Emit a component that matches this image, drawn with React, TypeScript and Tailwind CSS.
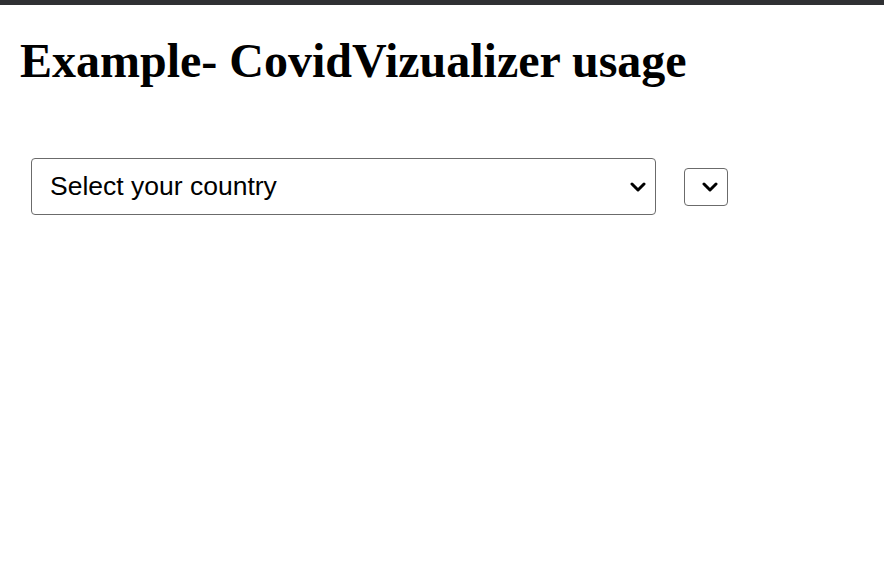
import React from "react";

function Chevron() {
  return (
    <svg
      width="16"
      height="10"
      viewBox="0 0 16 10"
      className="pointer-events-none absolute right-[10px] top-1/2 -translate-y-1/2"
    >
      <path d="M2 2 L8 8 L14 2" fill="none" stroke="#000" strokeWidth="3" strokeLinecap="round" strokeLinejoin="round" />
    </svg>
  );
}

export default function App() {
  return (
    <div className="min-h-screen bg-white">
      <div className="h-[5px] bg-[#2f3033]" />
      <div className="px-[20px]">
        <h1 className="mt-[28px] font-['Liberation_Serif',serif] text-[48px] font-bold leading-[56px] text-black">
          Example- CovidVizualizer usage
        </h1>
        <div className="mt-[69px] flex items-center gap-[28px] pl-[11px]">
          <div className="relative">
            <select className="h-[57px] w-[625px] appearance-none rounded-[4px] border border-[#6b6b6b] bg-white pl-[18px] font-['Liberation_Sans',Arial,sans-serif] text-[26.5px] text-black outline-none">
              <option>Select your country</option>
            </select>
            <Chevron />
          </div>
          <div className="relative">
            <select className="h-[38px] w-[44px] appearance-none rounded-[4px] border border-[#6b6b6b] bg-white outline-none" />
            <Chevron />
          </div>
        </div>
      </div>
    </div>
  );
}
